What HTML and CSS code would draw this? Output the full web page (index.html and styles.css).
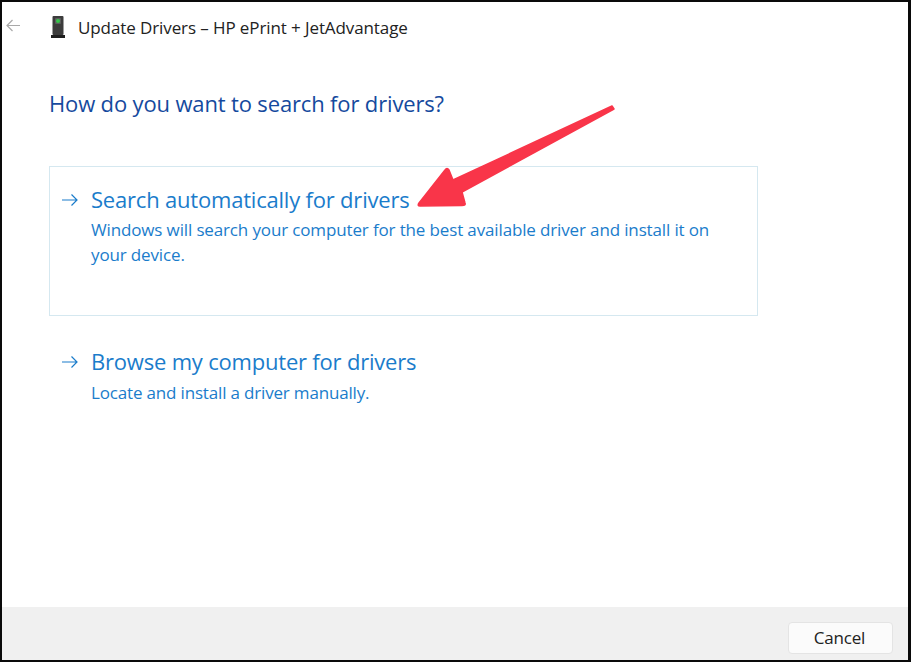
FILE: index.html
```html
<!DOCTYPE html>
<html lang="en">
<head>
<meta charset="utf-8">
<title>Update Drivers</title>
<link rel="stylesheet" href="styles.css">
</head>
<body>
<div class="window">
  <header class="titlebar">
    <svg class="back" width="16" height="14" viewBox="0 0 16 14"><path d="M15 6.500H2M7.500 1 2 6.500 7.500 12" fill="none" stroke="#a9a9a9" stroke-width="1.200"/></svg>
    <svg class="device" width="14" height="22" viewBox="0 0 14 22">
      <rect x="1.500" y="0" width="11" height="19" rx="1" fill="#3c3c3c"/>
      <rect x="4" y="2" width="6" height="6" rx="1" fill="#5c5c5c"/>
      <circle cx="7" cy="5" r="2" fill="#35c84a"/>
      <rect x="0" y="19" width="14" height="3" fill="#1e1e1e"/>
    </svg>
    <span class="title">Update Drivers – HP ePrint + JetAdvantage</span>
  </header>
  <main class="content">
    <h1 class="heading">How do you want to search for drivers?</h1>
    <div class="option option-active">
      <svg class="go" width="18" height="14" viewBox="0 0 18 14"><path d="M1 7h15M10.500 1.500 16 7l-5.500 5.500" fill="none" stroke="#1a7ccb" stroke-width="1.200"/></svg>
      <div class="option-text">
        <div class="option-title">Search automatically for drivers</div>
        <div class="option-desc">Windows will search your computer for the best available driver and install it on your device.</div>
      </div>
    </div>
    <div class="option">
      <svg class="go" width="18" height="14" viewBox="0 0 18 14"><path d="M1 7h15M10.500 1.500 16 7l-5.500 5.500" fill="none" stroke="#1a7ccb" stroke-width="1.200"/></svg>
      <div class="option-text">
        <div class="option-title">Browse my computer for drivers</div>
        <div class="option-desc">Locate and install a driver manually.</div>
      </div>
    </div>
  </main>
  <footer class="footer">
    <button class="cancel" type="button">Cancel</button>
  </footer>
  <svg class="callout" width="911" height="662" viewBox="0 0 911 662">
    <path d="M612 106 L614 109 L462 192 L465 203 Q466 205.500 462 205.500 L420 206 Q417 206 419 203 L445 170 Q447 167 449 170 L453 180 Z" fill="#f93549" stroke="#f93549" stroke-width="1.500" stroke-linejoin="round"/>
  </svg>
</div>
</body>
</html>
```
FILE: styles.css
```css
* { box-sizing: border-box; }
html, body { margin: 0; padding: 0; }
body {
  width: 911px;
  height: 662px;
  background: #000;
  font-family: "Open Sans", "Noto Sans", sans-serif;
  overflow: hidden;
}
.window {
  position: relative;
  width: 911px;
  height: 662px;
  border: 2px solid #0a0a0a;
  border-right-width: 3px;
  background: #fff;
  display: flex;
  flex-direction: column;
}
.titlebar {
  display: flex;
  align-items: center;
  height: 52px;
  padding-left: 3px;
  flex: none;
}
.back { margin-right: 30px; margin-top: -4px; }
.device { margin-right: 13px; margin-top: -2px; }
.title {
  font-size: 17px;
  letter-spacing: -0.1px;
  color: #222;
  margin-top: -2px;
}
.content {
  flex: 1;
  padding: 33px 0 0 47px;
}
.heading {
  margin: 0 0 47px;
  font-size: 22px;
  line-height: 32px;
  font-weight: 400;
  letter-spacing: -0.15px;
  color: #154a9e;
}
.option {
  width: 710px;
  display: flex;
  align-items: flex-start;
  padding: 15px 40px 0 11px;
  border: 1px solid transparent;
  height: 150px;
}
.option + .option { height: auto; margin-top: -3px; padding-top: 30px; }
.option-active { width: 709px; border-color: #d5e8f0; }
.go { margin-top: 11px; margin-right: 12px; flex: none; }
.option-title {
  font-size: 22px;
  line-height: 34px;
  letter-spacing: -0.2px;
  color: #1a7ccb;
}
.option-desc {
  font-size: 17px;
  line-height: 25px;
  letter-spacing: -0.14px;
  color: #1a7ccb;
  margin-top: 1px;
}
.option + .option .option-desc { margin-top: 2px; letter-spacing: -0.17px; }
.footer {
  margin-top: auto;
  height: 53px;
  flex: none;
  background: #f0f0f0;
  display: flex;
  justify-content: flex-end;
  padding: 15px 15px 0 0;
}
.cancel {
  width: 105px;
  height: 32px;
  background: #fbfbfb;
  border: 1px solid #e4e4e4;
  border-radius: 4px;
  font-family: inherit;
  font-size: 17px;
  letter-spacing: -0.2px;
  color: #222;
  padding: 0 2px 2px 0;
}
.callout {
  position: absolute;
  left: -2px;
  top: -2px;
  pointer-events: none;
}
```
